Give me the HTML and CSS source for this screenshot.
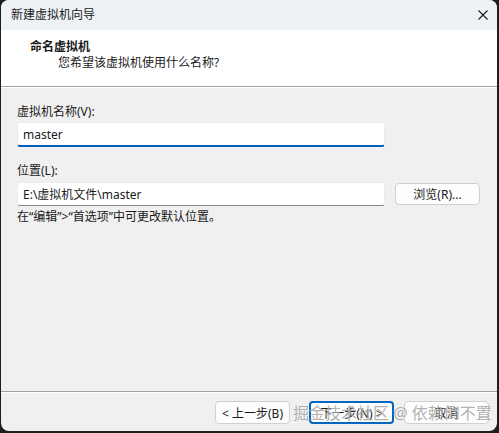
FILE: index.html
```html
<!DOCTYPE html>
<html lang="zh-CN">
<head>
    <meta charset="UTF-8">
    <meta name="viewport" content="width=device-width, initial-scale=1.0">
    <title>新建虚拟机向导</title>
    <link rel="stylesheet" href="styles.css">
</head>
<body>
    <div class="window">
        <div class="titlebar">
            <span class="title">新建虚拟机向导</span>
            <svg class="close" width="10" height="10" viewBox="0 0 10 10">
                <path d="M0.5 0.5 L9.5 9.5 M9.5 0.5 L0.5 9.5" stroke="#1b1b1b" stroke-width="1.1" fill="none"/>
            </svg>
        </div>

        <!-- Page header -->
        <div class="header">
            <div class="header-title">命名虚拟机</div>
            <div class="header-sub">您希望该虚拟机使用什么名称?</div>
        </div>

        <div class="content">
            <label class="field-label" for="vmName">虚拟机名称(V):</label>
            <div class="row">
                <input type="text" id="vmName" class="text-input focused" value="master">
            </div>

            <label class="field-label second" for="vmPath">位置(L):</label>
            <div class="row">
                <input type="text" id="vmPath" class="text-input" value="E:\虚拟机文件\master">
                <button class="btn browse-button">浏览(R)...</button>
            </div>
            <div class="hint">在“编辑”&gt;“首选项”中可更改默认位置。</div>
        </div>

        <div class="footer">
            <button class="btn back-button">&lt; 上一步(B)</button>
            <button class="btn next-button">下一步(N) &gt;</button>
            <button class="btn cancel-button">取消</button>
        </div>

        <div class="watermark">掘金技术社区 @ 依赖倒不置</div>
    </div>
</body>
</html>
```

FILE: styles.css
```css
html, body {
    margin: 0;
    height: 433px;
    background-color: #1e1e1e;
    overflow: hidden;
}
body {
    font-family: "Noto Sans", "Noto Sans CJK SC", sans-serif;
    font-size: 12px;
    color: #1a1a1a;
}
.window {
    position: relative;
    margin: 0 2px 0 1px;
    height: 431px;
    border-radius: 8px;
    overflow: hidden;
    background-color: #f0f0f0;
    display: flex;
    flex-direction: column;
}
.titlebar {
    height: 30px;
    flex-shrink: 0;
    display: flex;
    align-items: center;
    justify-content: space-between;
    padding: 0 9px 0 10px;
    background-color: #eef1f6;
}
.title {
    font-size: 12px;
    line-height: 16px;
}
.close {
    display: block;
}
.header {
    height: 57px;
    flex-shrink: 0;
    box-sizing: border-box;
    padding: 9px 0 0 29px;
    background-color: #ffffff;
    border-bottom: 1px solid #a0a0a0;
    box-shadow: 0 1px 0 #ffffff;
    line-height: 16px;
}
.header-title {
    font-weight: bold;
}
.header-sub {
    padding-left: 28px;
}
.content {
    flex: 1;
    padding: 16px 0 0 16px;
    margin-top: 1px;
}
.field-label {
    display: block;
    line-height: 16px;
    margin-bottom: 2px;
}
.field-label.second {
    margin-top: 16px;
    margin-bottom: 3px;
}
.row {
    display: flex;
    align-items: center;
    gap: 10px;
}
.text-input {
    width: 368px;
    height: 24px;
    box-sizing: border-box;
    margin: 0;
    padding: 0 5px;
    border: 1px solid #ececec;
    border-bottom: 1px solid #8a8a8a;
    border-radius: 3px;
    background-color: #ffffff;
    font-family: inherit;
    font-size: 12px;
    color: #1a1a1a;
    outline: none;
}
.text-input.focused {
    height: 25px;
    border-bottom: 2px solid #005fb8;
}
.hint {
    margin-top: 3px;
    line-height: 16px;
}
.btn {
    box-sizing: border-box;
    height: 22px;
    margin: 0;
    padding: 0;
    border: 1px solid #d0d0d0;
    border-radius: 4px;
    background-color: #fdfdfd;
    font-family: inherit;
    font-size: 12px;
    color: #1a1a1a;
    cursor: pointer;
}
.browse-button {
    width: 85px;
}
.footer {
    flex-shrink: 0;
    display: flex;
    justify-content: flex-end;
    padding: 9px 8px 7px 0;
    border-top: 1px solid #a0a0a0;
    box-shadow: inset 0 1px 0 #ffffff;
}
.footer .btn {
    height: 23px;
}
.back-button {
    width: 75px;
    margin-right: 19px;
}
.next-button {
    width: 85px;
    margin-right: 10px;
    border: 2px solid #0067c0;
}
.cancel-button {
    width: 85px;
}
.watermark {
    position: absolute;
    left: 292px;
    top: 402px;
    font-size: 16px;
    line-height: 22px;
    color: rgba(110, 110, 110, 0.55);
    text-shadow: 0 0 1px rgba(255, 255, 255, 0.8);
    white-space: nowrap;
    pointer-events: none;
}
```
